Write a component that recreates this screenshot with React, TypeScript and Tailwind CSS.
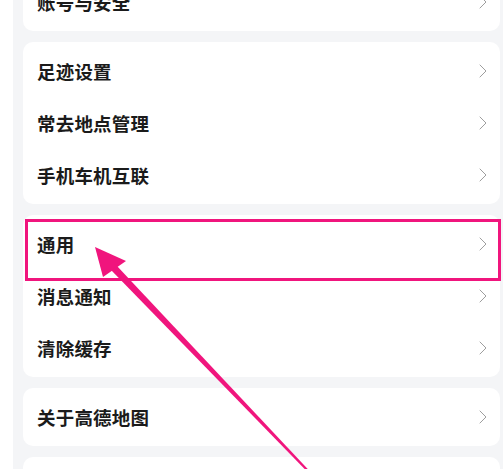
import { ChevronRight } from 'lucide-react';

interface Group {
  items: string[];
}

const groups: Group[] = [
  { items: ['账号与安全'] },
  { items: ['足迹设置', '常去地点管理', '手机车机互联'] },
  { items: ['通用', '消息通知', '清除缓存'] },
  { items: ['关于高德地图'] },
  { items: [''] },
];

function Row({ label }: { label: string }) {
  return (
    <div className="h-[52px] flex items-center justify-between pl-[14px] pr-[5px]">
      <span className="text-[18.5px] font-semibold text-[#1b1b1b] tracking-[0.2px] pt-[2px]">{label}</span>
      {label && <ChevronRight size={24} strokeWidth={1} className="text-[#9e9e9e]" />}
    </div>
  );
}

export default function App() {
  return (
    <div
      className="relative w-[503px] h-[469px] overflow-hidden bg-white flex"
      style={{ fontFamily: '"Noto Sans CJK SC", "Noto Sans", sans-serif' }}
    >
      {/* left edge */}
      <div className="w-[13px] flex-shrink-0 bg-white" />

      {/* settings list */}
      <div className="flex-1 bg-[#f4f5f7] pl-[10px] pr-[3px] flex flex-col gap-[11px] -mt-[27px]">
        {groups.map((group, i) => (
          <div key={i} className="bg-white rounded-[10px] py-[3px] flex flex-col">
            {group.items.map((label, j) => (
              <Row key={j} label={label} />
            ))}
          </div>
        ))}
      </div>

      {/* annotation: highlight box */}
      <div className="absolute left-[25px] top-[219px] w-[476px] h-[62px] border-[3px] border-[#f0157d]" />

      {/* annotation: arrow */}
      <svg className="absolute inset-0 pointer-events-none" width="503" height="469" viewBox="0 0 503 469">
        <polygon points="95,247 126,261 103,277" fill="#f0157d" />
        <polygon points="116.5,265.6 311,472.5 309,473.5 111.5,270.4" fill="#f0157d" />
      </svg>
    </div>
  );
}
